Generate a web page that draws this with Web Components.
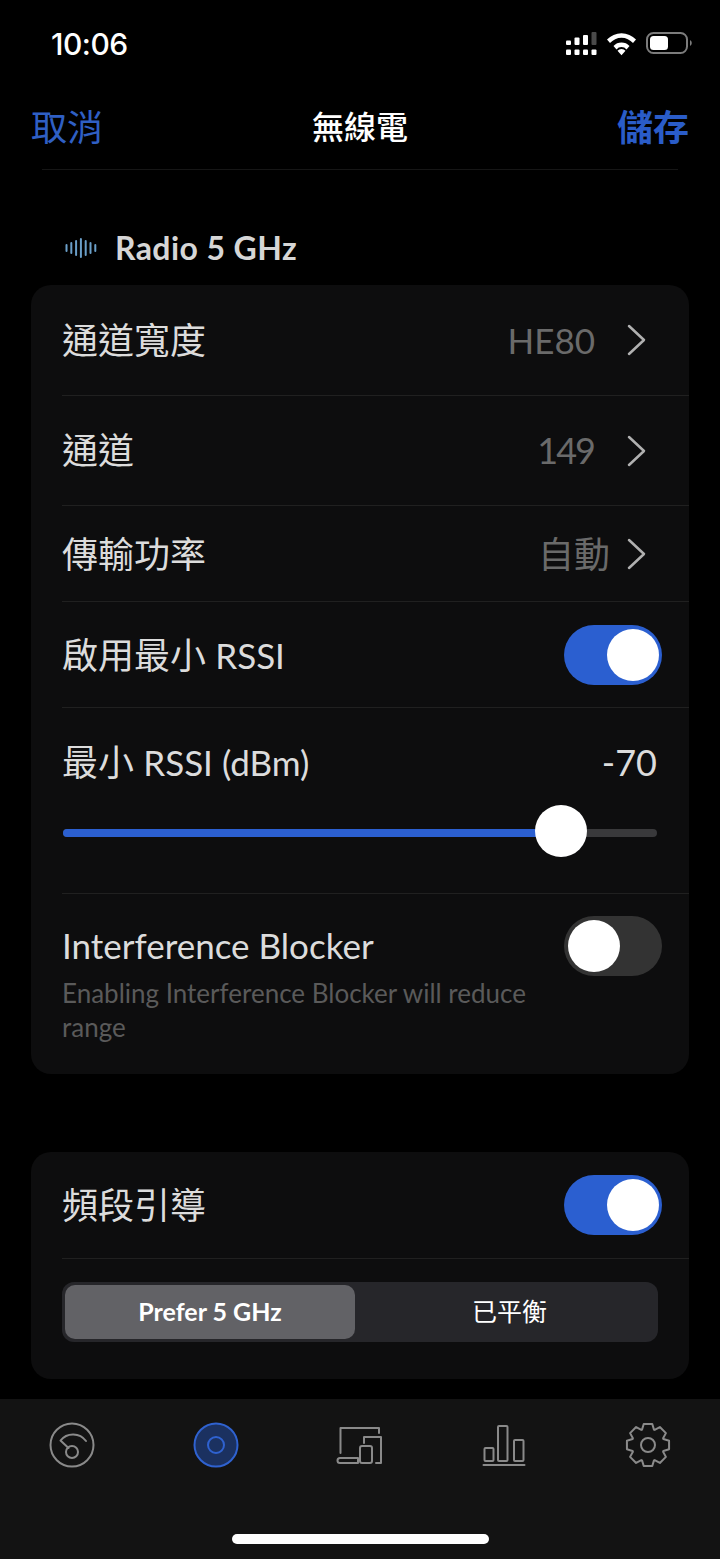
<!DOCTYPE html>
<html lang="zh-Hant">
<head>
<meta charset="utf-8">
<title>無線電</title>
<style>
  html, body { margin: 0; background: #000; }
  body {
    width: 720px;
    height: 1559px;
    overflow: hidden;
    display: flex;
    flex-direction: column;
    color: #dcdcdc;
    font-family: Lato, "Noto Sans CJK TC", sans-serif;
  }
  main { flex: 1; padding: 0 31px; }
  .label { display: block; line-height: 58px; margin-bottom: 2px; }
  .sub-label { display: block; font-size: 26px; line-height: 34px; color: #5a5a5a; max-width: 480px; }
  .lat { font-size: 35px; }
</style>
</head>
<body>
<status-bar></status-bar>
<nav-bar></nav-bar>
<main>
  <section-title>Radio 5 GHz</section-title>
  <settings-card>
    <setting-row value="HE80" style="--h:111px;--gap:32px;--vs:35px">通道寬度</setting-row>
    <setting-row value="149" style="--h:110px;--gap:33px;--ls:-2px;--lift:2px">通道</setting-row>
    <setting-row value="自動" style="--h:96px;--gap:17px">傳輸功率</setting-row>
    <setting-row style="--h:106px">啟用最小 <span class="lat">RSSI</span><toggle-switch slot="end" on></toggle-switch></setting-row>
    <slider-row label="最小 <span style='font-size:35px'>RSSI (dBm)</span>" value="-70" percent="83.8"></slider-row>
    <setting-row top last style="--h:180px">
      <span class="label">Interference Blocker</span>
      <span class="sub-label">Enabling Interference Blocker will reduce range</span>
      <toggle-switch slot="end"></toggle-switch>
    </setting-row>
  </settings-card>
  <settings-card style="margin-top:78px">
    <setting-row style="--h:107px">頻段引導<toggle-switch slot="end" on></toggle-switch></setting-row>
    <segment-control first="Prefer 5 GHz" second="已平衡"></segment-control>
  </settings-card>
</main>
<tab-bar></tab-bar>

<script>
class StatusBar extends HTMLElement {
  constructor() {
    super();
    this.attachShadow({mode: 'open'}).innerHTML = `
    <style>
      :host { display: flex; height: 88px; align-items: center; justify-content: space-between; padding: 0 28px 0 51px; }
      .time { font: 500 30px/1 Inter, sans-serif; color: #fff; letter-spacing: -.5px; }
      .icons { display: flex; align-items: center; }
      svg { display: block; }
    </style>
    <span class="time">10:06</span>
    <div class="icons">
      <svg width="126" height="24" viewBox="0 0 126 24">
        <g fill="#fff">
          <rect x="0" y="8.500" width="5" height="4.500" rx="1"/><rect x="8.500" y="5.500" width="5" height="7.500" rx="1"/>
          <rect x="17" y="3" width="5" height="10" rx="1"/>
          <rect x="0" y="17.500" width="5" height="5.500" rx="1"/><rect x="8.500" y="17.500" width="5" height="5.500" rx="1"/>
          <rect x="17" y="17.500" width="5" height="5.500" rx="1"/><rect x="25.500" y="17.500" width="5" height="5.500" rx="1"/>
        </g>
        <rect x="25.500" y="0" width="5" height="13" rx="1" fill="#4a4a4a"/>
        <path d="M41 7.500a20 20 0 0 1 29 0l-3 3.500a15.400 15.400 0 0 0-23 0z M47.500 14a11 11 0 0 1 16 0l-3 3.500a6.400 6.400 0 0 0-10 0z M51.500 18.800a5.200 5.200 0 0 1 8 0l-4 4.400z" fill="#fff"/>
        <rect x="81" y="1" width="40" height="20" rx="6.500" fill="none" stroke="#7c7c7c" stroke-width="2"/>
        <rect x="84" y="4" width="18" height="14" rx="3.500" fill="#fff"/>
        <path d="M124 8v6a3.400 3.400 0 0 0 0-6z" fill="#7c7c7c"/>
      </svg>
    </div>`;
  }
}

class NavBar extends HTMLElement {
  constructor() {
    super();
    this.attachShadow({mode: 'open'}).innerHTML = `
    <style>
      :host { display: block; }
      .bar { display: grid; grid-template-columns: 1fr auto 1fr; align-items: center; height: 78px; padding: 0 31px; }
      .side { font-size: 36px; line-height: 1; color: #2f5fc4; }
      .save { text-align: right; font-weight: 700; color: #2a5cc8; }
      .title { font-size: 32px; line-height: 1; font-weight: 500; color: #fff; }
      .line { height: 1px; margin: 3px 42px 0; background: #161616; }
    </style>
    <div class="bar">
      <span class="side">取消</span>
      <span class="title">無線電</span>
      <span class="side save">儲存</span>
    </div>
    <div class="line"></div>`;
  }
}

class SectionTitle extends HTMLElement {
  constructor() {
    super();
    this.attachShadow({mode: 'open'}).innerHTML = `
    <style>
      :host { display: flex; align-items: center; gap: 17px; height: 44px; padding: 56px 0 15px 34px; font-size: 32px; line-height: 1; font-weight: 700; letter-spacing: .4px; color: #d6d6d6; }
      svg { display: block; }
    </style>
    <svg width="33" height="22" viewBox="0 0 33 22" stroke="#6a9fc9" stroke-width="2" stroke-linecap="round">
      <path d="M1.500 8v6M6.300 6v10M11.100 4v14M15.900 2v18M20.700 4v14M25.500 6v10M30.300 8v6"/>
    </svg>
    <slot></slot>`;
  }
}

class SettingsCard extends HTMLElement {
  constructor() {
    super();
    this.attachShadow({mode: 'open'}).innerHTML = `
    <style>
      :host { display: block; background: #0d0d0e; border-radius: 20px; overflow: hidden; }
    </style>
    <slot></slot>`;
  }
}

class SettingRow extends HTMLElement {
  constructor() {
    super();
    const value = this.getAttribute('value');
    this.attachShadow({mode: 'open'}).innerHTML = `
    <style>
      :host { display: flex; box-sizing: border-box; height: var(--h, 110px); margin-left: 31px; padding-right: 27px; align-items: center; justify-content: space-between; border-bottom: 1px solid #202020; font-size: 36px; line-height: 1; color: #dcdcdc; }
      :host([last]) { border-bottom: 0; }
      :host([top]) { align-items: flex-start; padding-top: 22px; font-size: 35px; }
      .main { padding-bottom: var(--lift, 0); }
      .right { display: flex; align-items: center; gap: var(--gap, 17px); padding-right: 16px; color: #6a6a6a; }
      .right span { font-size: var(--vs, 36px); letter-spacing: var(--ls, 0); padding-bottom: var(--lift, 0); }
      svg { display: block; }
    </style>
    <div class="main"><slot></slot></div>
    ${value ? `<div class="right"><span>${value}</span>
      <svg width="19" height="32" viewBox="0 0 19 32" fill="none" stroke="#b0b0b0" stroke-width="2.500" stroke-linecap="round" stroke-linejoin="round"><path d="M2 2l15 14L2 30"/></svg>
    </div>` : ''}
    <slot name="end"></slot>`;
  }
}

class ToggleSwitch extends HTMLElement {
  constructor() {
    super();
    this.attachShadow({mode: 'open'}).innerHTML = `
    <style>
      :host { display: flex; box-sizing: border-box; width: 98px; height: 60px; padding: 4px; border-radius: 30px; background: #333; flex: none; }
      :host([on]) { background: #2b5fd0; justify-content: flex-end; padding-right: 3px; }
      .knob { width: 52px; height: 52px; border-radius: 50%; background: #fff; }
    </style>
    <div class="knob"></div>`;
  }
}

class RangeSlider extends HTMLElement {
  constructor() {
    super();
    const pct = this.getAttribute('percent') || 50;
    this.attachShadow({mode: 'open'}).innerHTML = `
    <style>
      :host { display: flex; align-items: center; height: 52px; position: relative; }
      .track { flex: 1; height: 8px; border-radius: 4px; background: #39393b; overflow: hidden; }
      .fill { height: 100%; width: ${pct}%; background: #2b5fd0; }
      .knob { position: absolute; top: -2px; left: ${pct}%; width: 52px; height: 52px; margin-left: -26px; border-radius: 50%; background: #fff; }
    </style>
    <div class="track"><div class="fill"></div></div>
    <div class="knob"></div>`;
  }
}

class SliderRow extends HTMLElement {
  constructor() {
    super();
    this.attachShadow({mode: 'open'}).innerHTML = `
    <style>
      :host { display: block; box-sizing: border-box; height: 186px; margin-left: 31px; padding: 24px 32px 0 1px; border-bottom: 1px solid #202020; font-size: 36px; color: #dcdcdc; }
      .head { display: flex; justify-content: space-between; line-height: 60px; margin-left: -1px; }
      range-slider { margin-top: 15px; }
    </style>
    <div class="head"><span>${this.getAttribute('label')}</span><span>${this.getAttribute('value')}</span></div>
    <range-slider percent="${this.getAttribute('percent')}"></range-slider>`;
  }
}

class SegmentControl extends HTMLElement {
  constructor() {
    super();
    this.attachShadow({mode: 'open'}).innerHTML = `
    <style>
      :host { display: grid; grid-template-columns: 290px 1fr; box-sizing: border-box; height: 60px; margin: 23px 31px 37px; padding: 3px; background: #26262a; border-radius: 12px; font-size: 25px; line-height: 1; color: #fff; }
      div { display: flex; align-items: center; justify-content: center; border-radius: 10px; padding-bottom: 2px; }
      .active { background: #626266; font-weight: 700; }
      .other { padding-left: 9px; }
    </style>
    <div class="active">${this.getAttribute('first')}</div>
    <div class="other">${this.getAttribute('second')}</div>`;
  }
}

// gear outline: 8 teeth, outer r 21.5, root r 16.5
function gearPath() {
  const pts = [];
  for (let i = 0; i < 8; i++) {
    const a = i * Math.PI / 4 - Math.PI / 2;
    [[-.37, 16.5], [-.2, 21.5], [.2, 21.5], [.37, 16.5]].forEach(([d, r]) => {
      pts.push((24 + r * Math.cos(a + d)).toFixed(2) + ' ' + (24 + r * Math.sin(a + d)).toFixed(2));
    });
  }
  return 'M' + pts.join('L') + 'Z';
}

class TabBar extends HTMLElement {
  constructor() {
    super();
    this.attachShadow({mode: 'open'}).innerHTML = `
    <style>
      :host { display: block; box-sizing: border-box; height: 160px; padding-top: 22px; background: #131313; }
      .tabs { display: grid; grid-template-columns: repeat(5, 1fr); justify-items: center; }
      svg { display: block; fill: none; stroke: #8a8a8a; stroke-width: 2; stroke-linecap: round; stroke-linejoin: round; }
      .active { stroke: #2f62d0; }
      .home { width: 257px; height: 10px; margin: 65px auto 0; border-radius: 5px; background: #fff; }
    </style>
    <div class="tabs">
      <svg width="48" height="48" viewBox="0 0 48 48">
        <circle cx="24" cy="24" r="21.500"/>
        <path d="M38 20A16 16 0 0 0 12.500 19.500L20.500 27"/>
        <circle cx="24" cy="31" r="6"/>
      </svg>
      <svg class="active" width="48" height="48" viewBox="0 0 48 48">
        <circle cx="24" cy="24" r="21.500" fill="#1b3160"/>
        <circle cx="24" cy="24" r="8"/>
      </svg>
      <svg width="48" height="48" viewBox="0 0 48 48">
        <path d="M4.500 32V7H43V12"/>
        <path d="M28 22V16H45V42H40"/>
        <rect x="24" y="25" width="12" height="17" rx="2"/>
        <path d="M22 37H4Q1.500 37 1.500 39.500Q1.500 42 4 42H22Z"/>
      </svg>
      <svg width="48" height="48" viewBox="0 0 48 48">
        <rect x="4.500" y="27" width="9" height="13" rx="1"/>
        <rect x="18" y="5" width="9.500" height="35" rx="1"/>
        <rect x="34" y="19" width="9.500" height="21" rx="1"/>
        <path d="M3.500 44H44.500"/>
      </svg>
      <svg width="48" height="48" viewBox="0 0 48 48">
        <path d="${gearPath()}"/>
        <circle cx="24" cy="24" r="7"/>
      </svg>
    </div>
    <div class="home"></div>`;
  }
}

customElements.define('status-bar', StatusBar);
customElements.define('nav-bar', NavBar);
customElements.define('section-title', SectionTitle);
customElements.define('settings-card', SettingsCard);
customElements.define('setting-row', SettingRow);
customElements.define('toggle-switch', ToggleSwitch);
customElements.define('range-slider', RangeSlider);
customElements.define('slider-row', SliderRow);
customElements.define('segment-control', SegmentControl);
customElements.define('tab-bar', TabBar);
</script>
</body>
</html>
